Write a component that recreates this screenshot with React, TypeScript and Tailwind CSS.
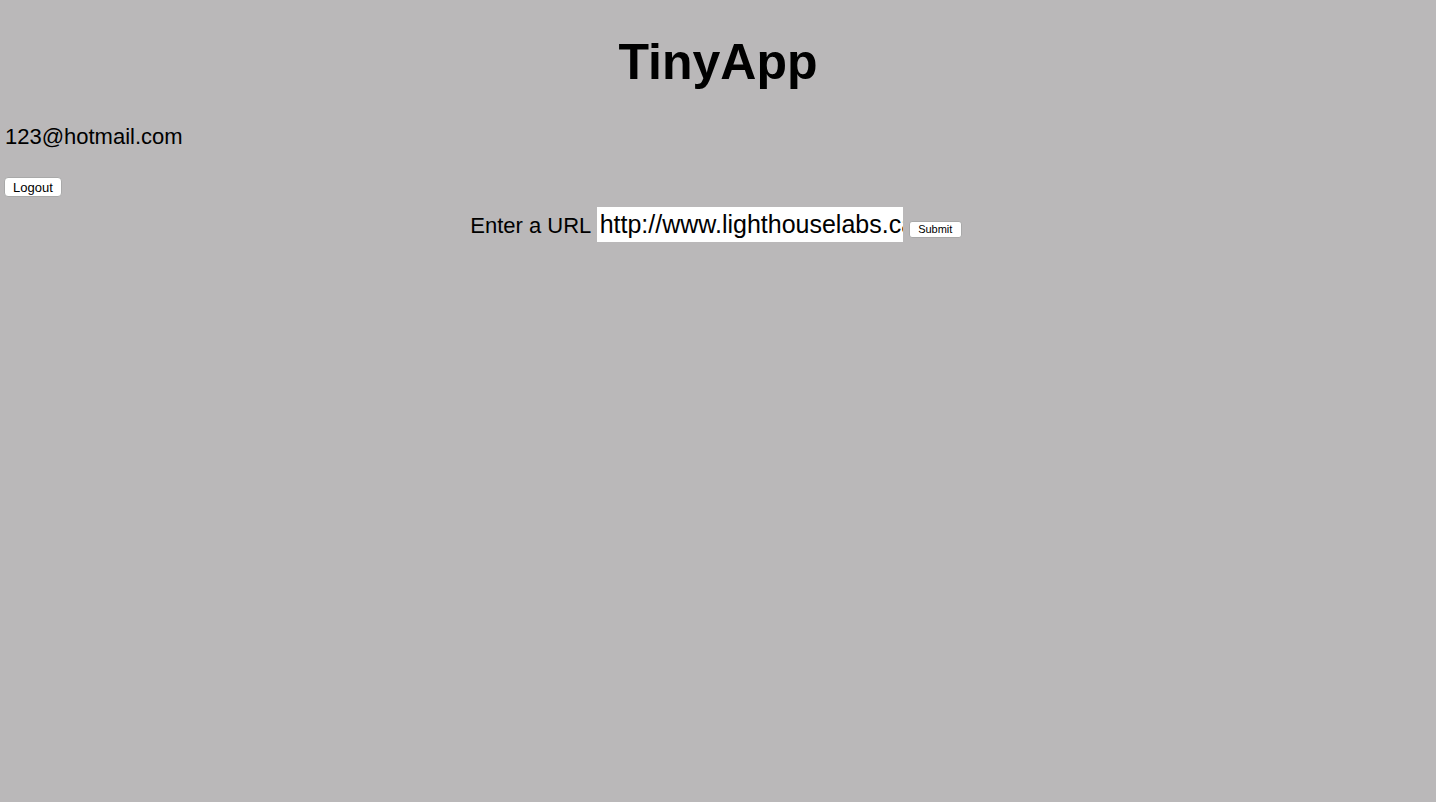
export default function App() {
  return (
    <div className="min-h-screen w-full bg-[#bab8b9] text-black font-['Liberation_Sans',Arial,sans-serif] overflow-hidden">
      {/* Header */}
      <h1 className="pt-[33px] text-center text-[50px] leading-[58px] font-bold">TinyApp</h1>

      {/* Logged-in user */}
      <div className="mt-[33px] pl-[5px] text-[22px] leading-[26px]">123@hotmail.com</div>

      <div className="mt-[27px] pl-[4px] h-[20px]">
        <button className="w-[58px] h-[20px] bg-white border border-[#a9a9a9] rounded-[4px] text-[13px] leading-none flex items-center justify-center">
          Logout
        </button>
      </div>

      {/* New URL form */}
      <form
        className="mt-[10px] pr-[4px] text-center text-[22px] leading-[35px]"
        onSubmit={(e) => e.preventDefault()}
      >
        <label htmlFor="longURL">Enter a URL</label>{' '}
        <input
          id="longURL"
          type="text"
          defaultValue="http://www.lighthouselabs.ca"
          className="w-[306px] h-[35px] bg-white pl-[3px] pr-0 text-[25px] align-baseline outline-none"
        />{' '}
        <button
          type="submit"
          className="w-[53px] h-[17px] bg-white border border-[#a9a9a9] rounded-[3px] text-[11px] leading-none align-baseline"
        >
          Submit
        </button>
      </form>
    </div>
  );
}
